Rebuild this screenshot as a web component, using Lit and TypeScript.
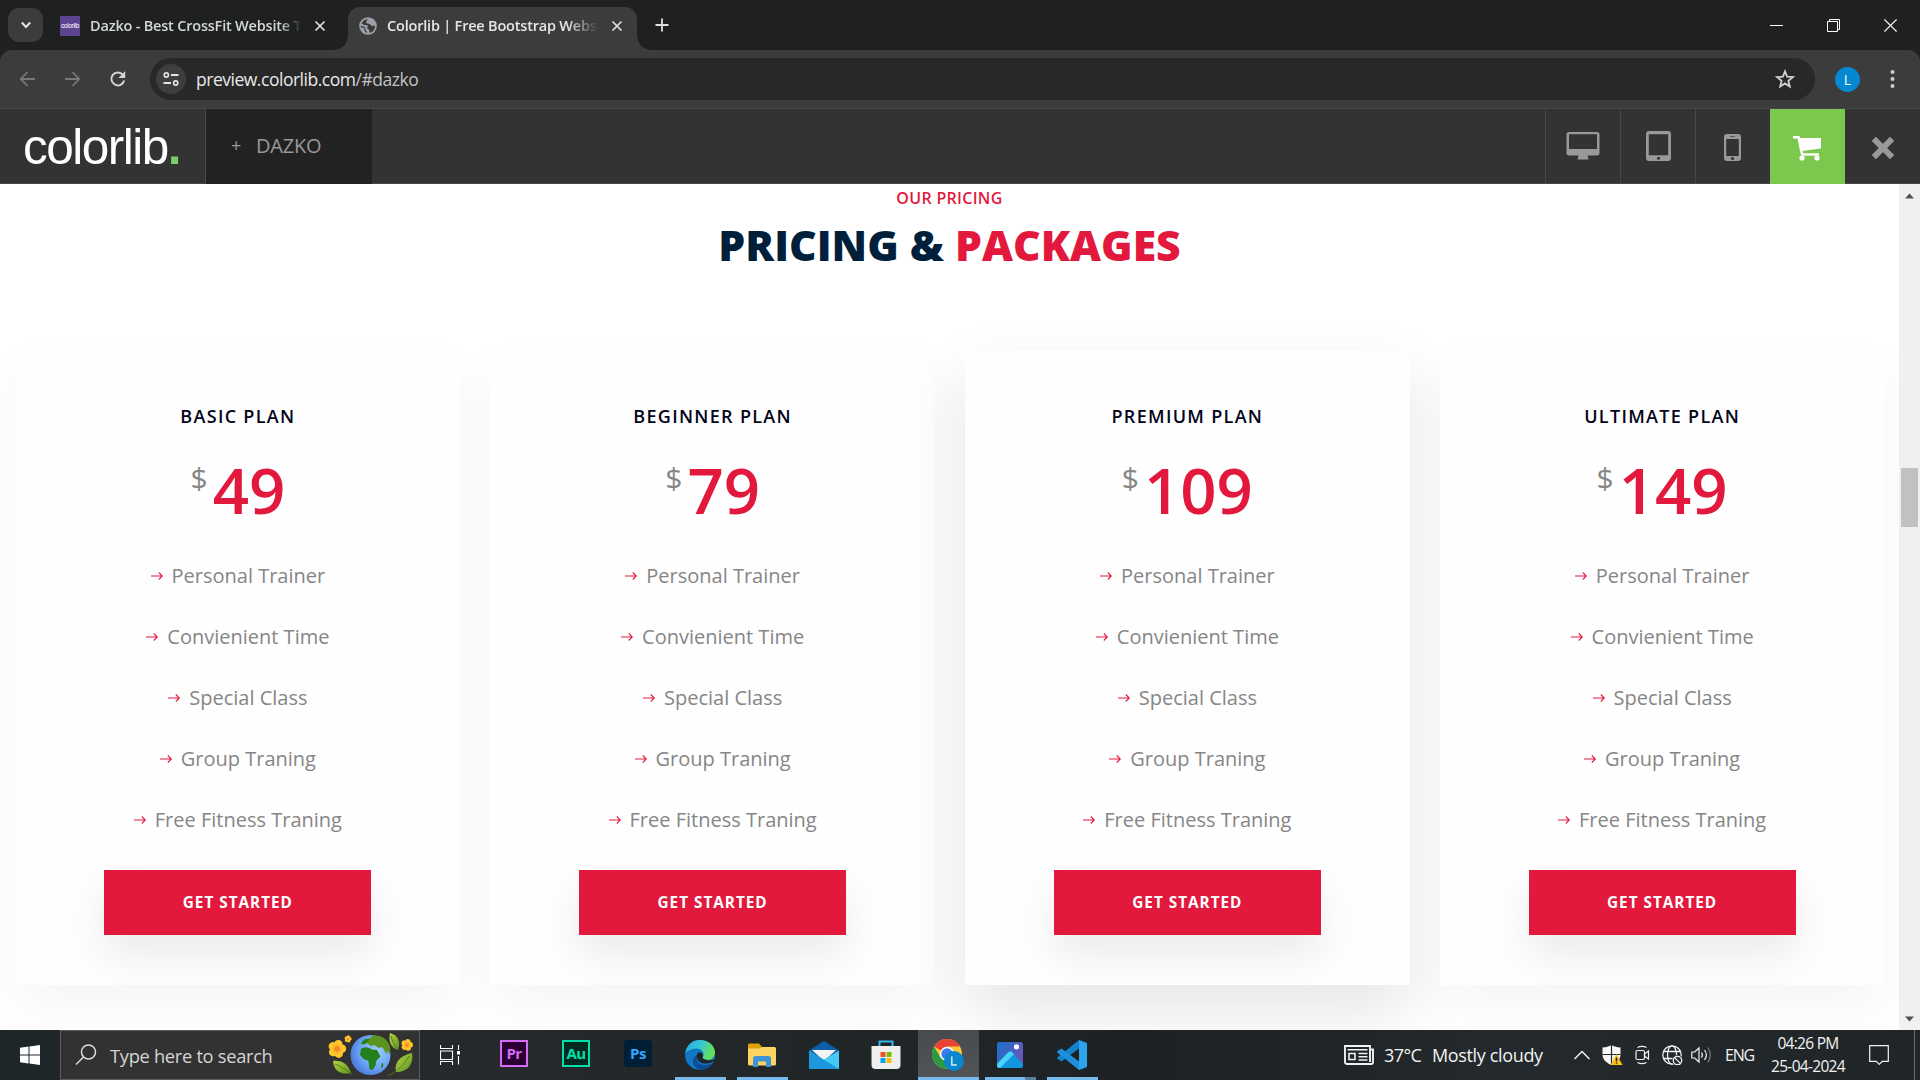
import { LitElement, html, css, svg } from "lit";
import { customElement, property } from "lit/decorators.js";
import { classMap } from "lit/directives/class-map.js";

const icon = (w: number, h: number, body: unknown, cls = "") =>
  html`<svg class="ic ${cls}" width=${w} height=${h} viewBox="0 0 ${w} ${h}" fill="none">${body}</svg>`;

const closeX = icon(12, 12, svg`<path d="M1.5 1.5l9 9M10.5 1.5l-9 9" stroke="#dfe1e1" stroke-width="1.7"/>`);

@customElement("browser-chrome")
class BrowserChrome extends LitElement {
  static styles = css`
    :host { display: block; background: #1f2121; font-family: "Open Sans", "Noto Sans", sans-serif; }
    .ic { display: block; flex: none; }
    .tabs { display: flex; height: 50px; align-items: center; padding-left: 8px; box-sizing: border-box; }
    .drop { width: 35px; height: 34px; border-radius: 11px; background: #3c3c3c; display: grid; place-items: center; }
    .tab { display: flex; align-items: center; box-sizing: border-box; height: 43px; }
    .tab.one { width: 305px; padding-left: 17px; margin-top: 1px; }
    .tab.two { width: 289px; padding-left: 11px; padding-bottom: 6px; background: #3c3c3c; border-radius: 12px 12px 0 0; align-self: flex-end; position: relative; }
    .tab.two::before, .tab.two::after { content: ""; position: absolute; bottom: 0; width: 14px; height: 14px; }
    .tab.two::before { left: -14px; background: radial-gradient(circle at 0 0, transparent 13.5px, #3c3c3c 14px); }
    .tab.two::after { right: -14px; background: radial-gradient(circle at 100% 0, transparent 13.5px, #3c3c3c 14px); }
    .fav { width: 20px; height: 20px; background: #5d4390; color: #fff; font: 6.5px/20px "Liberation Sans", sans-serif; letter-spacing: -0.3px; text-align: center; overflow: hidden; }
    .label { white-space: nowrap; font-size: 14.5px; font-weight: 600; color: #d4d6d6; line-height: 24px; letter-spacing: -0.2px; }
    .one .label { margin-left: 10px; width: 211px; mask-image: linear-gradient(90deg, #000 190px, transparent 212px); }
    .one .ic { margin-left: 13px; }
    .two .label { margin-left: 10px; width: 212px; color: #e6e6e6; mask-image: linear-gradient(90deg, #000 180px, transparent 211px); }
    .two .label + .ic { margin-left: 12px; }
    .plus { margin-left: 18px; }
    .win { margin-left: auto; display: flex; align-items: center; }
    .win .ic { margin-right: 44px; }
    .win .ic:last-child { margin-right: 23px; }
    .bar { display: flex; align-items: center; height: 58px; background: #3c3c3c; border-radius: 12px 12px 0 0; padding: 0 25px 0 19px; box-sizing: border-box; }
    .nav { margin-right: 28px; }
    .nav.r { margin-right: 23px; }
    .omni { flex: 1; height: 42px; border-radius: 21px; background: #282828; display: flex; align-items: center; padding: 0 20px 0 6px; }
    .site { width: 30px; height: 30px; border-radius: 50%; background: #3e3e3e; display: grid; place-items: center; }
    .url { margin-left: 10px; font-size: 17.5px; color: #e8e8e8; letter-spacing: -0.48px; flex: 1; }
    .url span { color: #c2c2c2; }
    .ava { width: 25px; height: 25px; border-radius: 50%; background: #0388d1; color: #fff; font-size: 14px; line-height: 25px; text-align: center; margin: 0 30px 0 20px; }
  `;
  render() {
    return html`
      <div class="tabs">
        <div class="drop">${icon(12, 10, svg`<path d="M1.8 2.5L6 7l4.2-4.5" stroke="#e4e4e4" stroke-width="2"/>`)}</div>
        <div class="tab one">
          <div class="fav">colorlib</div>
          <div class="label">Dazko - Best CrossFit Website T</div>
          ${closeX}
        </div>
        <div class="tab two">
          ${icon(18, 18, svg`<circle cx="9" cy="9" r="8.8" fill="#9aa0a6"/>
            <path d="M9.500 2.200c-1.600.6-2.600 2-2 3.600c.5 1 2 1 3.200 1.200c1 .3.8 1.500 1.800 1.800c1.200.2 2.300-.3 3.500-.1c.2 3.500-2 6.400-5.200 7.100c-.7-.8-.2-1.800-.6-2.700c-.5-1-1.800-1-1.900-2.200c0-.9.8-1.400.4-2.200c-.7-1-2-.4-3.200-.8c-1-.3-1.700-1-2.900-1.200c.8-2.700 3.400-4.800 6.900-4.500z" fill="#3c3c3c"/>
            <path d="M1.800 9.500c1.500.2 3 .3 3.800 1.500c.6 1 .1 2.200.9 3.100c.4.500 1 .8 1 1.700" stroke="#3c3c3c" stroke-width="1.200"/>`)}
          <div class="label">Colorlib | Free Bootstrap Webs</div>
          ${closeX}
        </div>
        ${icon(14, 14, svg`<path d="M7 .5v13M.5 7h13" stroke="#dfe1e1" stroke-width="1.800"/>`, "plus")}
        <div class="win">
          ${icon(13, 13, svg`<path d="M0 6.500h13" stroke="#fff"/>`)}
          ${icon(13, 13, svg`<path d="M.5 2.500h10v10h-10zM2.500 2.500v-2h10v10h-2" stroke="#fff"/>`)}
          ${icon(13, 13, svg`<path d="M.4.400l12.200 12.200M12.600.400L.4 12.600" stroke="#e8e8e8" stroke-width="1.300"/>`)}
        </div>
      </div>
      <div class="bar">
        ${icon(17, 16, svg`<path d="M16 8H2M8.500 1L1.800 8l6.700 7" stroke="#787878" stroke-width="1.800"/>`, "nav")}
        ${icon(17, 16, svg`<path d="M1 8h14M8.500 1l6.700 7l-6.700 7" stroke="#787878" stroke-width="1.800"/>`, "nav")}
        ${icon(18, 18, svg`<path d="M15.200 10.600A6.500 6.500 0 1 1 13.800 4.600" stroke="#d5d5d5" stroke-width="2"/><path d="M16.200 1v7H9.500z" fill="#d5d5d5"/>`, "nav r")}
        <div class="omni">
          <div class="site">${icon(16, 14, svg`<circle cx="3.300" cy="3" r="2.100" stroke="#e4e4e4" stroke-width="1.600"/><circle cx="12.700" cy="11" r="2.100" stroke="#e4e4e4" stroke-width="1.600"/><path d="M8 3h7.500M.5 11h7.500" stroke="#e4e4e4" stroke-width="1.800"/>`)}</div>
          <div class="url">preview.colorlib.com<span>/#dazko</span></div>
          ${icon(20, 20, svg`<path d="M10 2.300l2.100 5.400l5.700.4l-4.400 3.700l1.400 5.700l-4.800-3.100l-4.800 3.100l1.400-5.700l-4.400-3.700l5.700-.4z" stroke="#cfcfcf" stroke-width="1.800"/>`)}
        </div>
        <div class="ava">L</div>
        ${icon(5, 20, svg`<circle cx="2.500" cy="3" r="2" fill="#cfcfcf"/><circle cx="2.500" cy="10" r="2" fill="#cfcfcf"/><circle cx="2.500" cy="17" r="2" fill="#cfcfcf"/>`)}
      </div>`;
  }
}

@customElement("preview-bar")
class PreviewBar extends LitElement {
  static styles = css`
    :host { display: flex; height: 76px; box-sizing: border-box; background: #333; border-top: 1px solid #474747; border-bottom: 1px solid #474747; }
    .ic { display: block; }
    .logo { width: 206px; box-sizing: border-box; padding-left: 23px; border-right: 1px solid #484848; font: 49.5px/76px "Liberation Sans", sans-serif; letter-spacing: -1.5px; color: #fff; white-space: nowrap; }
    .logo b { color: #78cf63; }
    .theme { width: 166px; box-sizing: border-box; background: #222; margin-bottom: -1px; color: #999; font: 20px/73px "Open Sans", "Noto Sans", sans-serif; padding-left: 25px; display: flex; letter-spacing: -0.2px; }
    .theme i { font-style: normal; width: 25px; font-size: 18px; }
    .tools { margin-left: auto; display: flex; }
    .cell { width: 75px; box-sizing: border-box; border-left: 1px solid #484848; display: grid; place-items: center; }
    .cell.phone { padding: 3px 2px 0 0; }
    .cell.buy { background: #7cc84e; border: 0; margin-bottom: -1px; padding: 2px 1px 0 0; }
    .cell.end { border: 0; padding: 4px 0 0 1px; }
  `;
  render() {
    const g = "#999";
    return html`
      <div class="logo">colorlib<b>.</b></div>
      <div class="theme"><i>+</i>DAZKO</div>
      <div class="tools">
        <div class="cell">${icon(34, 30, svg`<path fill-rule="evenodd" d="M3 1h28a2.500 2.500 0 0 1 2.500 2.500V22A2.500 2.500 0 0 1 31 24.500H21.500L22.500 28.500H11.500L12.500 24.500H3A2.500 2.500 0 0 1 .5 22V3.500A2.500 2.500 0 0 1 3 1zM3 3.300V18H31V3.300z" fill=${g}/>`)}</div>
        <div class="cell">${icon(25, 32, svg`<path fill-rule="evenodd" d="M3 1h19a3 3 0 0 1 3 3v24a3 3 0 0 1-3 3H3a3 3 0 0 1-3-3V4a3 3 0 0 1 3-3zM2.800 4.300V25.300H22.200V4.300z" fill=${g}/><circle cx="12.500" cy="28.200" r="1.500" fill="#333"/>`)}</div>
        <div class="cell phone">${icon(17, 27, svg`<path fill-rule="evenodd" d="M3 0h11a3 3 0 0 1 3 3v21a3 3 0 0 1-3 3H3a3 3 0 0 1-3-3V3a3 3 0 0 1 3-3zM2.200 5V22H14.800V5z" fill=${g}/><path d="M6 2.500h5" stroke="#555"/><circle cx="8.500" cy="24.500" r="1.600" fill="#333"/>`)}</div>
        <div class="cell buy">${icon(30, 26, svg`<path d="M1 2.200H6.500L10 19.500" stroke="#fff" stroke-width="2.400"/><path d="M7 3H29V13.500L9.500 16z" fill="#fff"/><path d="M9.500 19.500H27" stroke="#fff" stroke-width="2.400"/><circle cx="10" cy="23" r="2.600" fill="#fff"/><circle cx="25" cy="23" r="2.600" fill="#fff"/>`)}</div>
        <div class="cell end">${icon(22, 22, svg`<path d="M4 4l14 14M18 4l-14 14" stroke="#999" stroke-width="6" stroke-linecap="square"/>`)}</div>
      </div>`;
  }
}

@customElement("plan-card")
class PlanCard extends LitElement {
  @property() name = "";
  @property() price = "";
  @property({ type: Boolean }) active = false;
  static styles = css`
    :host { display: block; }
    .card { height: 635px; box-sizing: border-box; padding-top: 53px; background: #fefefe; text-align: center; box-shadow: 0 22px 50px rgba(0, 0, 0, 0.04); font-family: "Open Sans", "Noto Sans", sans-serif; display: flex; flex-direction: column; align-items: center; }
    .card.active { box-shadow: 0 28px 60px rgba(0, 0, 0, 0.1); }
    .name { font-size: 18px; font-weight: 600; line-height: 26px; letter-spacing: 1.3px; color: #02041a; text-transform: uppercase; }
    .price { display: flex; margin-top: 21px; height: 80px; line-height: 80px; font-size: 63.5px; font-weight: 600; color: #e2193d; }
    .price sup { font-size: 30px; line-height: 56px; font-weight: 400; color: #868686; margin-right: 5px; }
    ul { list-style: none; margin: 15px 0 0; padding: 0; }
    li { height: 61px; line-height: 61px; font-size: 20px; color: #868686; display: flex; justify-content: center; align-items: center; white-space: nowrap; }
    li svg { margin-right: 9px; }
    .btn { width: 267px; height: 65px; margin-top: 20px; background: #e2193d; color: #fff; font-size: 15.3px; font-weight: 700; line-height: 64px; letter-spacing: 1px; box-shadow: 0 20px 42px rgba(0, 0, 0, 0.08); }
  `;
  render() {
    const items = ["Personal Trainer", "Convienient Time", "Special Class", "Group Traning", "Free Fitness Traning"];
    return html`<div class=${classMap({ card: true, active: this.active })}>
      <div class="name">${this.name}</div>
      <div class="price"><sup>$</sup>${this.price}</div>
      <ul>${items.map((t) => html`<li>${icon(12, 10, svg`<path d="M0 5h11.300M7.800 1.500L11.300 5L7.800 8.500" stroke="#e2193d" stroke-width="1.100"/>`)}${t}</li>`)}</ul>
      <div class="btn">GET STARTED</div>
    </div>`;
  }
}

@customElement("pricing-page")
class PricingPage extends LitElement {
  static styles = css`
    :host { display: flex; height: 846px; background: #fff; overflow: hidden; font-family: "Open Sans", "Noto Sans", sans-serif; }
    .page { width: 1899px; overflow: hidden; display: flex; flex-direction: column; align-items: center; }
    .kicker { margin-top: 2px; font-size: 16px; line-height: 24px; font-weight: 600; color: #e2193d; letter-spacing: 0.3px; }
    h2 { margin: 2px 0 0; font-size: 42.7px; line-height: 66px; font-weight: 800; color: #001f3a; white-space: nowrap; }
    h2 span { color: #e2193d; }
    .plans { align-self: stretch; margin-top: 72px; padding: 0 14.5px 0 15.5px; display: grid; grid-template-columns: repeat(4, 1fr); column-gap: 30px; }
    .scroll { width: 21px; background: #f0f0f0; display: flex; flex-direction: column; align-items: center; justify-content: space-between; padding: 9px 0 8px; box-sizing: border-box; }
    .track { flex: 1; padding-top: 269px; }
    .thumb { width: 17px; height: 59px; background: #c1c1c1; }
  `;
  render() {
    return html`
      <div class="page">
        <div class="kicker">OUR PRICING</div>
        <h2>PRICING &amp; <span>PACKAGES</span></h2>
        <div class="plans">
          <plan-card name="Basic Plan" price="49"></plan-card>
          <plan-card name="Beginner Plan" price="79"></plan-card>
          <plan-card name="Premium Plan" price="109" active></plan-card>
          <plan-card name="Ultimate Plan" price="149"></plan-card>
        </div>
      </div>
      <div class="scroll">
        ${icon(9, 6, svg`<path d="M0 5.500L4.500.5L9 5.500z" fill="#505050"/>`)}
        <div class="track"><div class="thumb"></div></div>
        ${icon(9, 6, svg`<path d="M0 .5L4.500 5.500L9 .5z" fill="#505050"/>`)}
      </div>`;
  }
}

const flower = (x: number, y: number, r: number) => svg`<g transform="translate(${x} ${y})">
  ${[0, 72, 144, 216, 288].map((a) => svg`<circle cx="0" cy=${-r * 0.5} r=${r * 0.42} transform="rotate(${a + 15})" fill="#fdc62b"/>`)}
  <circle r=${r * 0.45} fill="#fdb62b"/><circle r=${r * 0.28} fill="#f5872c"/></g>`;

const earth = icon(90, 48, svg`
  <defs>
    <radialGradient id="sea" cx="0.650" cy="0.400" r="0.650"><stop offset="0" stop-color="#9dccfb"/><stop offset="0.600" stop-color="#70a8f5"/><stop offset="1" stop-color="#4d7de0"/></radialGradient>
    <linearGradient id="leaf" x1="0" y1="0" x2="1" y2="1"><stop offset="0" stop-color="#b5d343"/><stop offset="1" stop-color="#5f9420"/></linearGradient>
  </defs>
  <circle cx="45.500" cy="24" r="20" fill="url(#sea)"/>
  <path d="M36 12c2-3 5-4 8-4l3-3c8-2 16 3 18 11c.5 3 .3 5-.5 7l-2-3l-1 3l-3-5l-2-2l-3 1l-4-3l-4 1l-3-3l-4 2z" fill="#5c9420"/>
  <path d="M36 18c2-1.500 5-2.500 8-1l3 1.500l5 .5l3.500 6.500l-4 4l-1 5l-3 4.500l-3-1l-1-8l-5-2l-3.500-4zM57 32l1.500 1l-1 4l-1.500-1z" fill="#23801b"/>
  <path d="M36 12l4-4l5-.500l-2 3l-5 3z" fill="#23801b"/>
  ${flower(12, 18, 10)}${flower(23, 8, 4)}${flower(82, 14, 6.500)}
  <path d="M8 30c9-1 15 3 18 12c-9 2-17-1-18-12z" fill="url(#leaf)"/>
  <path d="M65 2c8 2 11 8 8 17c-7-2-10-8-8-17z" fill="url(#leaf)"/>
  <path d="M87 22c2 11-4 19-16 19c-2-9 3-16 16-19z" fill="url(#leaf)"/>
  <path d="M84 25C79 34 72 41 63 44.500M10 33c5 2 11 6 17 10.500M66 5c1 5 4 10 7 14" stroke="#4c7a18" stroke-width="0.900"/>`);

@customElement("task-bar")
class TaskBar extends LitElement {
  static styles = css`
    :host { display: flex; height: 50px; background: linear-gradient(90deg, #1f262a 0, #25292c 480px, #1f2427 1000px, #1e2024 1130px, #23292c 1500px, #202528 1920px); color: #f2f2f2; font-family: "Open Sans", "Noto Sans", sans-serif; }
    .ic { display: block; flex: none; }
    .start { width: 60px; display: grid; place-items: center; }
    .search { width: 360px; box-sizing: border-box; border: 1px solid #5c5c5c; background: #323232; display: flex; align-items: center; padding: 0 4px 0 14px; font-size: 18.3px; color: #d5d5d5; letter-spacing: -0.3px; }
    .search span { margin-left: 13px; flex: 1; }
    .view { width: 63px; display: flex; align-items: center; padding-left: 20px; box-sizing: border-box; }
    .app { width: 62px; display: flex; align-items: center; justify-content: center; position: relative; }
    .app.on::after { content: ""; position: absolute; bottom: 0; left: 6px; right: 5px; height: 3px; background: #76b9ed; }
    .app.sel { background: linear-gradient(#484b4d, #525557) no-repeat 1px 0 / 61px 50px; }
    .app.sel::after { left: 1px; right: 0; }
    .app.many::after { background: linear-gradient(90deg, #76b9ed 40px, #55809f 40px); }
    .adobe { width: 28px; height: 27px; box-sizing: border-box; border: 2px solid; font-size: 15px; font-weight: 700; line-height: 22px; text-align: center; letter-spacing: -0.5px; margin-bottom: 3px; }
    .pr { color: #d36df5; background: #2a0033; }
    .au { color: #00e0ac; background: #00291f; }
    .ps { color: #31a8ff; background: #001e36; border-color: #001e36; border-radius: 4px; }
    .tray { margin-left: auto; display: flex; align-items: center; font-size: 18px; white-space: nowrap; }
    .temp { margin-left: 10px; width: 48px; letter-spacing: -0.6px; }
    .sky { width: 142px; letter-spacing: -0.35px; }
    .lang { margin-left: 12px; width: 42px; font-size: 16px; letter-spacing: -1.2px; }
    .clock { width: 82px; text-align: center; font-size: 15.500px; line-height: 23px; letter-spacing: -0.7px; }
    .note { margin-left: 20px; }
    .show { margin-left: 25px; width: 5px; height: 50px; border-left: 1px solid #6a6e70; }
    .g { margin-left: 12px; }
    .v { margin-left: 8px; }
  `;
  render() {
    const w = "#f2f2f2";
    return html`
      <div class="start">${icon(20, 20, svg`<path d="M0 2.800L8.500 1.600V9.500H0zM9.500 1.500L20 0V9.500H9.500zM0 10.500H8.500V18.400L0 17.200zM9.500 10.500H20V20L9.500 18.500z" fill="#fff"/>`)}</div>
      <div class="search">
        ${icon(22, 22, svg`<circle cx="13.500" cy="8" r="7" stroke="#dedede" stroke-width="1.500"/><path d="M8.500 13L1 20.500" stroke="#dedede" stroke-width="1.500"/>`)}
        <span>Type here to search</span>${earth}
      </div>
      <div class="view">${icon(20, 20, svg`<path d="M.5 0v3.500h12V0M.5 20v-3.500h12V20M.5 6h12v8.500H.5zM18.500 0v5M18.500 11v8.500" stroke="#fff" stroke-width="1.100"/><path d="M17 6h3v3.500h-3z" fill="#fff"/>`)}</div>
      <div class="app"><div class="adobe pr">Pr</div></div>
      <div class="app"><div class="adobe au">Au</div></div>
      <div class="app"><div class="adobe ps">Ps</div></div>
      <div class="app on">${icon(30, 30, svg`
        <defs><linearGradient id="e1" x1="0" y1="0" x2="1" y2="0.300"><stop offset="0" stop-color="#2aa4e0"/><stop offset="0.500" stop-color="#34c6d8"/><stop offset="1" stop-color="#62e05a"/></linearGradient></defs>
        <circle cx="15" cy="15" r="15" fill="#1178c8"/>
        <path d="M.3 12.500C2 4.500 8 0 15 0c9 0 15 6 15 12.500c0 5-4 7.500-8 7.500c-3 0-5-1-4.500-2.500c2.500-3 .5-9-6-9C5.500 8.500 1.500 12 .300 12.500z" fill="url(#e1)"/>
        <path d="M12 15.500c-2 7 5 12.500 16 7.500c-3 5-8 7-13 7c-5-2-7.500-6-7-10c.3-2 2-4 4-4.500z" fill="#0c4d94"/>
        <path d="M13.500 12.500c-3 2-2.500 7 1.500 9.500c4 2.300 9 2 13-.5c.8-.5 1.500 0 1 1l3-1V18c-4 3-10 3-14 .5c-1.200-1 .5-2 0-4c-.4-1.500-2.500-3-4.500-2z" fill="#1f2528"/>`)}</div>
      <div class="app on">${icon(28, 24, svg`<path d="M0 2a1.500 1.500 0 0 1 1.500-1.500H11L14 4H27V8H0z" fill="#e2a007"/><path d="M0 5.500H12L14 4H26.500A1.500 1.500 0 0 1 28 5.500V21a1.500 1.500 0 0 1-1.500 1.500h-25A1.500 1.500 0 0 1 0 21z" fill="#fcd462"/><path d="M5 24v-8.500a2.500 2.500 0 0 1 2.500-2.500h13a2.500 2.500 0 0 1 2.500 2.500V24h-5v-5.500h-8V24z" fill="#3f93d6"/>`)}</div>
      <div class="app">${icon(30, 28, svg`<path d="M0 9.500L15 0L30 9.500L15 20z" fill="#0f5ea8"/><path d="M3 9h24L15 20z" fill="#f3f3f3"/><path d="M0 9.500L19 22L30 28H0z" fill="#2bb0ea"/><path d="M30 9.500V28H2L15 18.500z" fill="#45c9f5"/><path d="M0 9.500L30 28H0z" fill="#1e98dc"/>`)}</div>
      <div class="app">${icon(30, 30, svg`<path d="M8.500 6V1.500h13V6" stroke="#35b7e8" stroke-width="2"/><path d="M.5 6h29v19a4 4 0 0 1-4 4h-21a4 4 0 0 1-4-4z" fill="#efefef"/><path d="M9.500 12h5v5h-5z" fill="#f25022"/><path d="M15.500 12h5v5h-5z" fill="#7fba00"/><path d="M9.500 18h5v5h-5z" fill="#00a4ef"/><path d="M15.500 18h5v5h-5z" fill="#ffb900"/>`)}</div>
      <div class="app on sel">${icon(32, 32, svg`<circle cx="15" cy="15" r="15" fill="#fcc934"/><path d="M15 15L2 7.500A15 15 0 0 1 28 7.500H15z" fill="#ea4335"/><path d="M2 7.500A15 15 0 0 0 15 30L21 19L15 15L8.500 18.500z" fill="#2a9a47"/><circle cx="15" cy="15" r="7.200" fill="#fff"/><circle cx="15" cy="15" r="5.700" fill="#3b7ded"/><circle cx="22" cy="22" r="10" fill="#0b86cc"/><path d="M19.800 17.500v8.500h5" stroke="#d9edf8" stroke-width="1.500"/>`)}</div>
      <div class="app on many">${icon(26, 26, svg`<defs><linearGradient id="p1" x1="0" y1="0" x2="1" y2="0.500"><stop offset="0" stop-color="#1772cf"/><stop offset="1" stop-color="#6a55b8"/></linearGradient></defs><rect width="26" height="26" rx="2.500" fill="url(#p1)"/><path d="M0 22.500L11 10.500a3 3 0 0 1 4.500 0L26 22v1.500a2.500 2.500 0 0 1-2.500 2.500h-21A2.500 2.500 0 0 1 0 23.500z" fill="#1495e0"/><path d="M0 22L11 10.500a3 3 0 0 1 4.500 0L17 12L3 26A3 3 0 0 1 0 23z" fill="#45d5f5"/><circle cx="19.500" cy="4.800" r="2.600" fill="#fff"/>`)}</div>
      <div class="app on">${icon(30, 30, svg`<path d="M22 0L30 3V27L22 30z" fill="#2ba4ee"/><path d="M22 0V8.500L4.500 21.500L.5 19Q-.3 18.300.5 17.300z" fill="#1481cb"/><path d="M22 30V21.500L4.500 8.500L.5 11Q-.3 11.700.5 12.700z" fill="#1c90dc"/>`)}</div>
      <div class="tray">
        ${icon(30, 20, svg`<path d="M27 4.500h2V17a2 2 0 0 1-2 2H3a2 2 0 0 1-2-2V1h25v16" stroke=${w} stroke-width="1.900"/><path d="M3.500 4.800h20M14.500 8.500h9M14.500 11.800h9M14.500 15h9" stroke=${w} stroke-width="1.600"/><path d="M5 8.500h6v6H5z" stroke=${w} stroke-width="1.600"/>`)}
        <span class="temp">37°C</span><span class="sky">Mostly cloudy</span>
        ${icon(16, 10, svg`<path d="M.5 9L8 1.500L15.500 9" stroke=${w} stroke-width="1.500"/>`)}
        ${icon(21, 20, svg`<path d="M9.500 0c2.500 1.600 5.500 2.500 9 2.500v7c0 5-4 8.500-9 10.500c-5-2-9-5.500-9-10.500v-7c3.500 0 6.500-.9 9-2.500z" fill="#f7f7f7"/><path d="M9.500 0v20M.5 9.500h18" stroke="#23282b" stroke-width="1.200"/><path d="M14.500 9L20.500 20H8.500z" fill="#fbc117"/><path d="M14.500 12.500v4M14.500 17.500v1.300" stroke="#222" stroke-width="1.400"/>`, "g")}
        ${icon(15, 20, svg`<rect x="1" y="5.500" width="8.500" height="9" rx="1.500" stroke=${w} stroke-width="1.200"/><path d="M9.500 9l4-3v8l-4-3zM2.500 2.500Q7 .3 11.500 2.500M2.500 17.500Q7 19.700 11.500 17.500" stroke=${w} stroke-width="1.200"/>`, "g")}
        ${icon(21, 20, svg`<circle cx="10" cy="10" r="9.200" stroke=${w} stroke-width="1.300"/><ellipse cx="10" cy="10" rx="4.500" ry="9.200" stroke=${w} stroke-width="1.300"/><path d="M1.500 6.500h17M1.500 13.500h17" stroke=${w} stroke-width="1.300"/><circle cx="15.500" cy="15.500" r="5.500" fill="#22282b"/><circle cx="15.500" cy="15.500" r="4.200" stroke=${w} stroke-width="1.300"/><path d="M12.600 12.600l5.800 5.800" stroke=${w} stroke-width="1.300"/>`, "g")}
        ${icon(22, 20, svg`<path d="M.8 7h3L8 3v14l-4.200-4h-3z" stroke=${w} stroke-width="1.200"/><path d="M10.500 7.500q1.800 2.500 0 5M13.500 5q3.800 5 0 10" stroke=${w} stroke-width="1.200"/><path d="M16.800 2.500q5 7.500 0 15" stroke="#7a7e80" stroke-width="1.200"/>`, "v")}
        <span class="lang">ENG</span>
        <div class="clock">04:26 PM<br />25-04-2024</div>
        ${icon(20, 20, svg`<path d="M.7.700h18.600v15.600h-6l-3 3l-3-3H.7z" stroke=${w} stroke-width="1.200"/>`, "note")}
        <div class="show"></div>
      </div>`;
  }
}

@customElement("app-root")
class AppRoot extends LitElement {
  static styles = css`
    :host { display: block; width: 1920px; height: 1080px; overflow: hidden; }
  `;
  render() {
    return html`<browser-chrome></browser-chrome><preview-bar></preview-bar><pricing-page></pricing-page><task-bar></task-bar>`;
  }
}
